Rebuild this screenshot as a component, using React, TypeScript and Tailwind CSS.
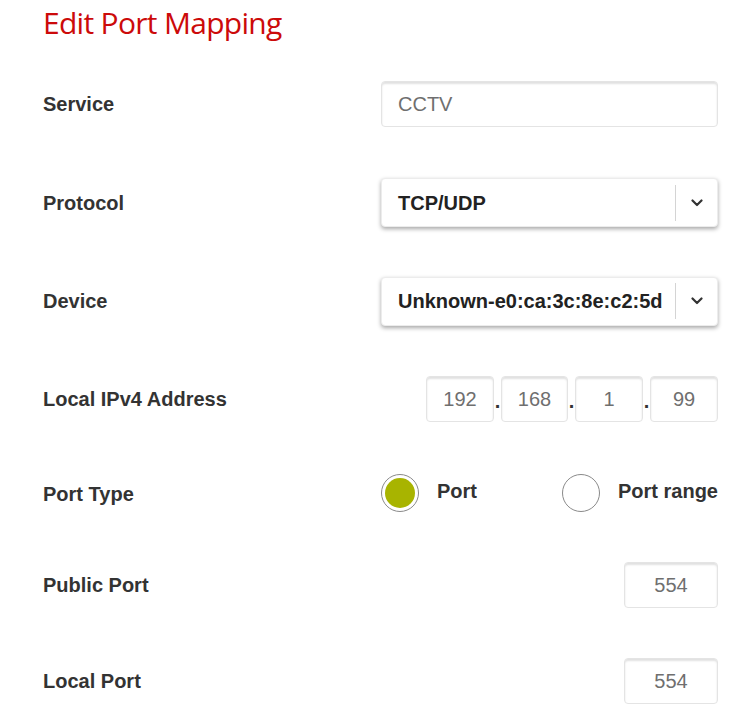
import React from "react";

const font = { fontFamily: '"Liberation Sans", Arial, sans-serif' };

const Row: React.FC<{ label: string; h: string; children: React.ReactNode }> = ({ label, h, children }) => (
	<div className={`flex items-center ${h}`}>
		<div className="w-[338px] shrink-0 text-[20px] font-bold text-[#333]">{label}</div>
		<div className="flex flex-1 items-center">{children}</div>
	</div>
);

const TextBox: React.FC<{ value: string; className?: string; center?: boolean }> = ({ value, className, center }) => (
	<div
		className={`flex h-[46px] items-center rounded-[4px] border border-[#e4e4e4] bg-white text-[20px] text-[#6f6f6f] shadow-[inset_0_2px_2px_rgba(0,0,0,0.12)] ${
			center ? "justify-center" : "pl-[16px]"
		} ${className ?? ""}`}
	>
		{value}
	</div>
);

const Chevron = () => (
	<svg width="12" height="8" viewBox="0 0 12 8" fill="none">
		<path d="M1.5 1.5 L6 6 L10.5 1.5" stroke="#333" strokeWidth="2.2" strokeLinecap="round" strokeLinejoin="round" />
	</svg>
);

const Select: React.FC<{ value: string }> = ({ value }) => (
	<div className="flex h-[49px] w-full items-center rounded-[4px] border border-[#ececec] bg-white shadow-[0_2px_4px_rgba(0,0,0,0.35)]">
		<div className="flex-1 pl-[16px] text-[20px] font-bold text-[#222]">{value}</div>
		<div className="h-[36px] w-px bg-[#d4d4d4]" />
		<div className="flex w-[41px] justify-center">
			<Chevron />
		</div>
	</div>
);

const Radio: React.FC<{ checked?: boolean; label: string }> = ({ checked, label }) => (
	<div className="flex items-center gap-[18px]">
		<div className="flex h-[38px] w-[38px] items-center justify-center rounded-full border border-[#8a8a8a] bg-white">
			{checked && <div className="h-[30px] w-[30px] rounded-full bg-[#a8b400]" />}
		</div>
		<span className="-mt-[4px] text-[20px] font-bold text-[#333]">{label}</span>
	</div>
);

const Dot = () => <div className="flex w-[7px] justify-center self-end pb-[11px] text-[20px] font-bold leading-none text-[#333]">.</div>;

export default function App() {
	return (
		<div className="h-[726px] w-[743px] overflow-hidden bg-white pl-[43px] pr-[25px]" style={font}>
			<div className="h-[55px] pt-[6px]">
				<h1 className="text-[30px] leading-[34px] text-[#cc0a0a]" style={{ fontFamily: '"Open Sans", "Noto Sans", sans-serif', letterSpacing: "-0.7px" }}>
					Edit Port Mapping
				</h1>
			</div>
			<Row label="Service" h="h-[98px]">
				<TextBox value="CCTV" className="w-full" />
			</Row>
			<Row label="Protocol" h="h-[99px]">
				<Select value="TCP/UDP" />
			</Row>
			<Row label="Device" h="h-[98px]">
				<Select value="Unknown-e0:ca:3c:8e:c2:5d" />
			</Row>
			<Row label="Local IPv4 Address" h="h-[98px]">
				<div className="ml-auto flex h-[46px]">
					<TextBox value="192" center className="w-[68px]" />
					<Dot />
					<TextBox value="168" center className="w-[67px]" />
					<Dot />
					<TextBox value="1" center className="w-[68px]" />
					<Dot />
					<TextBox value="99" center className="w-[68px]" />
				</div>
			</Row>
			<Row label="Port Type" h="h-[92px]">
				<div className="-mt-[2px] flex w-full items-center justify-between">
					<Radio checked label="Port" />
					<Radio label="Port range" />
				</div>
			</Row>
			<Row label="Public Port" h="h-[90px]">
				<TextBox value="554" center className="ml-auto w-[94px]" />
			</Row>
			<Row label="Local Port" h="h-[102px]">
				<TextBox value="554" center className="ml-auto w-[94px]" />
			</Row>
		</div>
	);
}
